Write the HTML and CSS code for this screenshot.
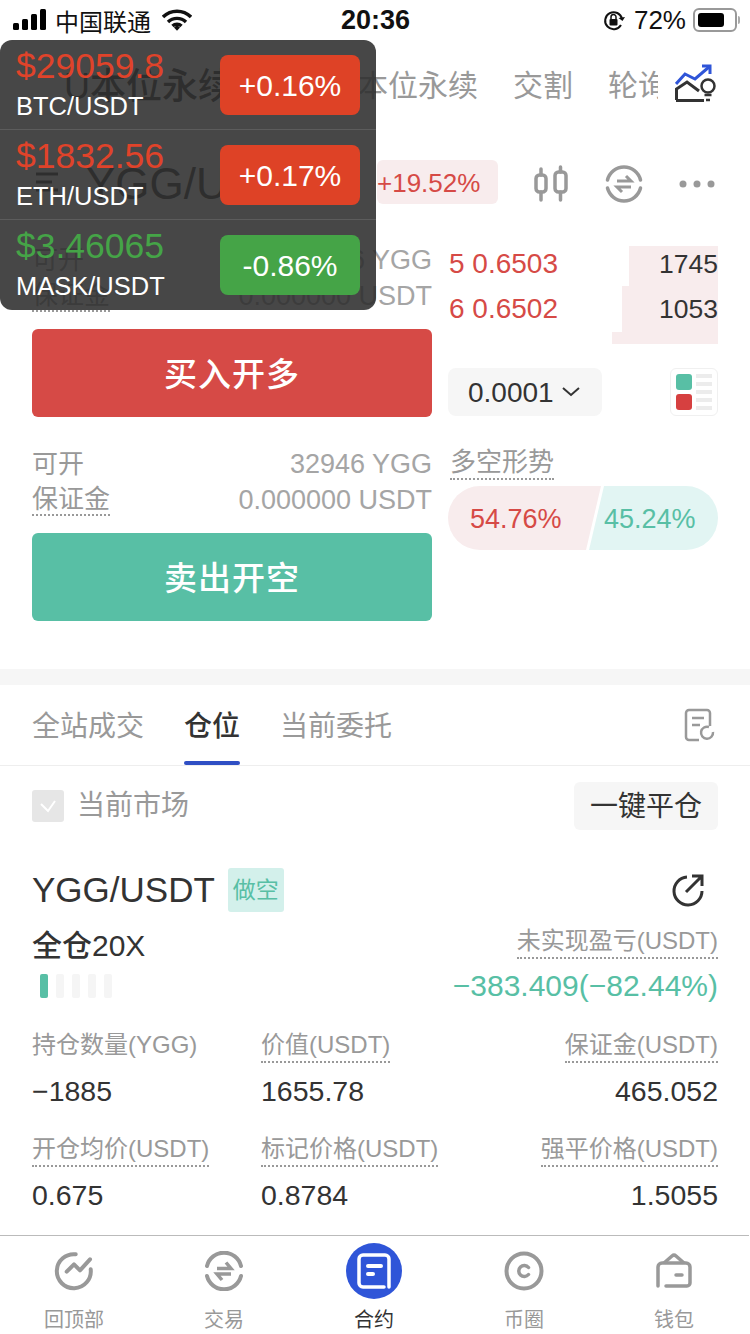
FILE: index.html
```html
<!DOCTYPE html>
<html lang="zh-CN">
<head>
<meta charset="utf-8">
<title>合约</title>
<link rel="stylesheet" href="styles.css">
</head>
<body>
<div id="page">
	<div class="status">
		<svg class="signal" width="36" height="22" viewBox="0 0 36 22"><rect x="0" y="14" width="6" height="7" rx="1.5"/><rect x="9" y="10" width="6" height="11" rx="1.5"/><rect x="18" y="5" width="6" height="16" rx="1.5"/><rect x="27" y="0" width="6" height="21" rx="1.5"/></svg>
		<span class="carrier">中国联通</span>
		<svg class="wifi" width="30" height="22" viewBox="0 0 30 22"><path d="M1 8a20 20 0 0 1 28 0M6 13a13 13 0 0 1 18 0M10.500 17a6.500 6.500 0 0 1 9 0" fill="none" stroke="#111" stroke-width="3.400"/><path d="M12 18.500l3-2.500 3 2.500-3 3.300z" fill="#111"/></svg>
		<span class="clock">20:36</span>
		<div class="status-right">
			<svg width="22" height="24" viewBox="0 0 22 24"><path d="M18 17a8.500 8.500 0 1 1 1-6" fill="none" stroke="#111" stroke-width="2"/><path d="M15.500 10l4 3 2.500-4" fill="#111"/><rect x="6.500" y="11" width="8" height="6.500" rx="1" fill="#111"/><path d="M8 11V9a2.500 2.500 0 0 1 5 0v2" fill="none" stroke="#111" stroke-width="1.500"/></svg>
			<span class="battery-num">72%</span>
			<div class="battery"><div class="battery-fill"></div></div>
			<div class="battery-nub"></div>
		</div>
	</div>

	<div class="nav">
		<span class="nav-item nav-on">U本位永续</span>
		<span class="nav-item">币本位永续</span>
		<span class="nav-item">交割</span>
		<span class="nav-item nav-cut">轮询</span>
		<svg class="nav-icon" width="42" height="40" viewBox="0 0 42 40"><path d="M1 20l9-10 10 5L34 3" fill="none" stroke="#2f55d8" stroke-width="3"/><path d="M27 2h8v8" fill="none" stroke="#2f55d8" stroke-width="3"/><path d="M1.500 36V25L12 18l12 9" fill="none" stroke="#333" stroke-width="3"/><path d="M1 36.500h28" stroke="#333" stroke-width="3"/><circle cx="33" cy="22" r="6.500" fill="none" stroke="#333" stroke-width="2.500"/><path d="M29.500 31h7M31 36h4" stroke="#333" stroke-width="2.500"/></svg>
	</div>

	<div class="pair">
		<svg class="pair-menu" width="24" height="22" viewBox="0 0 24 22"><path d="M0 3h22M0 11h16M0 19h22" stroke="#333" stroke-width="3"/></svg>
		<span class="pair-name">YGG/USDT</span>
		<span class="pair-rate">+19.52%</span>
		<div class="pair-tools">
			<svg width="34" height="38" viewBox="0 0 34 38"><g fill="none" stroke="#999" stroke-width="3.500" stroke-linecap="round"><rect x="2" y="10" width="10" height="17" rx="3.500"/><rect x="21" y="7" width="11" height="20" rx="3.500"/><path d="M7 4v6M7 27v8M26.500 2v5M26.500 27v8"/></g></svg>
			<svg class="swap" width="38" height="38" viewBox="0 0 38 38"><path d="M2.500 15a17 17 0 0 1 33 0M2.500 23a17 17 0 0 0 33 0" fill="none" stroke="#999" stroke-width="3.500" stroke-linecap="round"/><path d="M12 16h14l-5-5M26 22H12l5 5" fill="none" stroke="#999" stroke-width="3"/></svg>
			<svg width="36" height="10" viewBox="0 0 36 10"><circle cx="4" cy="5" r="3.500" fill="#999"/><circle cx="18" cy="5" r="3.500" fill="#999"/><circle cx="32" cy="5" r="3.500" fill="#999"/></svg>
		</div>
	</div>

	<div class="trade">
		<div class="trade-left">
			<div class="line"><span class="label">可开</span><span class="amount">32946 YGG</span></div>
			<div class="line"><span class="label dotted">保证金</span><span class="amount">0.000000 USDT</span></div>
			<div class="big-btn btn-red">买入开多</div>
			<div class="line line-second"><span class="label">可开</span><span class="amount">32946 YGG</span></div>
			<div class="line"><span class="label dotted">保证金</span><span class="amount">0.000000 USDT</span></div>
			<div class="big-btn btn-green">卖出开空</div>
		</div>
		<div class="trade-right">
			<div class="depth">
				<div class="depth-row">
					<div class="depth-fill" style="width:89px"></div>
					<span class="depth-price">5 0.6503</span><span class="depth-num">1745</span>
				</div>
				<div class="depth-row depth-row2">
					<div class="depth-fill" style="width:96px"></div>
					<span class="depth-price">6 0.6502</span><span class="depth-num">1053</span>
				</div>
				<div class="depth-row depth-row3">
					<div class="depth-fill" style="width:106px"></div>
				</div>
			</div>
			<div class="tools">
				<div class="select">0.0001<svg width="18" height="10" viewBox="0 0 18 10"><path d="M1 1l8 7 8-7" fill="none" stroke="#333" stroke-width="2"/></svg></div>
				<div class="layout-btn">
					<div class="layout-blocks"><i class="block-green"></i><i class="block-red"></i></div>
					<div class="layout-lines"><i></i><i></i><i></i><i></i><i></i></div>
				</div>
			</div>
			<div class="trend-title"><span class="dotted">多空形势</span></div>
			<div class="trend">
				<div class="trend-long">54.76%</div>
				<div class="trend-short">45.24%</div>
			</div>
		</div>
	</div>

	<div class="band"></div>

	<div class="tabs">
		<span class="tab">全站成交</span>
		<span class="tab tab-on">仓位</span>
		<span class="tab">当前委托</span>
		<svg class="tab-icon" width="32" height="34" viewBox="0 0 32 34"><path d="M15 32H5a3 3 0 0 1-3-3V5a3 3 0 0 1 3-3h18a3 3 0 0 1 3 3v13M8 10h12M8 17h8" fill="none" stroke="#999" stroke-width="2.500"/><path d="M29 24a6 6 0 1 1-4-5" fill="none" stroke="#999" stroke-width="2.500"/></svg>
	</div>

	<div class="filter">
		<div class="check"><svg width="18" height="14" viewBox="0 0 18 14"><path d="M2 5l7 7 7-10" fill="none" stroke="#fff" stroke-width="2"/></svg></div>
		<span class="filter-text">当前市场</span>
		<span class="close-all">一键平仓</span>
	</div>

	<div class="position">
		<div class="pos-head">
			<span class="pos-name">YGG/USDT</span>
			<span class="pos-tag">做空</span>
			<svg class="pos-share" width="34" height="34" viewBox="0 0 34 34"><path d="M16 4a14 14 0 1 0 15 14" fill="none" stroke="#333" stroke-width="3"/><path d="M15 19L31 3M21 3h10v10" fill="none" stroke="#333" stroke-width="3"/></svg>
		</div>
		<div class="pos-summary">
			<div>
				<div class="pos-mode">全仓20X</div>
				<div class="risk"><i class="risk-on"></i><i></i><i></i><i></i><i></i></div>
			</div>
			<div class="pos-profit">
				<span class="stat-label dotted">未实现盈亏(USDT)</span>
				<div class="profit-num">−383.409(−82.44%)</div>
			</div>
		</div>
		<div class="stats">
			<div class="stat"><span class="stat-label">持仓数量(YGG)</span><div class="stat-num">−1885</div></div>
			<div class="stat"><span class="stat-label dotted">价值(USDT)</span><div class="stat-num">1655.78</div></div>
			<div class="stat stat-end"><span class="stat-label dotted">保证金(USDT)</span><div class="stat-num">465.052</div></div>
			<div class="stat"><span class="stat-label dotted">开仓均价(USDT)</span><div class="stat-num">0.675</div></div>
			<div class="stat"><span class="stat-label dotted">标记价格(USDT)</span><div class="stat-num">0.8784</div></div>
			<div class="stat stat-end"><span class="stat-label dotted">强平价格(USDT)</span><div class="stat-num">1.5055</div></div>
		</div>
	</div>

	<div class="tabbar">
		<div class="bar-item">
			<div class="bar-icon"><svg width="40" height="40" viewBox="0 0 40 40"><path d="M21.700 3.300a17 17 0 1 0 15 15" fill="none" stroke="#999" stroke-width="4" stroke-linecap="round"/><path d="M12.700 20.700L20 13.300l6 6 10-11" fill="none" stroke="#999" stroke-width="4" stroke-linecap="round" stroke-linejoin="round"/></svg></div>
			<span>回顶部</span>
		</div>
		<div class="bar-item">
			<div class="bar-icon"><svg width="40" height="40" viewBox="0 0 40 40"><path d="M3 15a17.500 17.500 0 0 1 34 0M3 25a17.500 17.500 0 0 0 34 0" fill="none" stroke="#999" stroke-width="4" stroke-linecap="round"/><path d="M13 17.500h14l-5-6M27 23H13l5 6" fill="none" stroke="#999" stroke-width="3.500"/></svg></div>
			<span>交易</span>
		</div>
		<div class="bar-item bar-on">
			<div class="bar-icon bar-circle"><svg width="34" height="36" viewBox="0 0 34 36"><path d="M27 34H6a4 4 0 0 1-4-4V6a4 4 0 0 1 4-4h22a4 4 0 0 1 4 4v28" fill="none" stroke="#fff" stroke-width="3.500" stroke-linecap="round"/><path d="M11 13h13M11 21h5" stroke="#fff" stroke-width="4" stroke-linecap="round"/></svg></div>
			<span>合约</span>
		</div>
		<div class="bar-item">
			<div class="bar-icon"><svg width="40" height="40" viewBox="0 0 40 40"><circle cx="20" cy="20" r="17.500" fill="none" stroke="#999" stroke-width="4"/><path d="M24.500 16.500a5.500 5.500 0 1 0 0 7" fill="none" stroke="#999" stroke-width="3.500" stroke-linecap="round"/></svg></div>
			<span>币圈</span>
		</div>
		<div class="bar-item">
			<div class="bar-icon"><svg width="36" height="36" viewBox="0 0 36 36"><path d="M2 33V14a4 4 0 0 1 4-4h24a4 4 0 0 1 4 4v16a3 3 0 0 1-3 3H10" fill="none" stroke="#999" stroke-width="3.500" stroke-linecap="round"/><path d="M8 10l8-7a3 3 0 0 1 4 0l8 7" fill="none" stroke="#999" stroke-width="3.500"/><path d="M20 22h6" stroke="#999" stroke-width="3.500" stroke-linecap="round"/></svg></div>
			<span>钱包</span>
		</div>
	</div>

	<div class="ticker">
		<div class="ticker-row">
			<div class="ticker-info"><div class="ticker-price up">$29059.8</div><div class="ticker-name">BTC/USDT</div></div>
			<div class="ticker-rate rate-up">+0.16%</div>
		</div>
		<div class="ticker-row">
			<div class="ticker-info"><div class="ticker-price up">$1832.56</div><div class="ticker-name">ETH/USDT</div></div>
			<div class="ticker-rate rate-up">+0.17%</div>
		</div>
		<div class="ticker-row">
			<div class="ticker-info"><div class="ticker-price down">$3.46065</div><div class="ticker-name">MASK/USDT</div></div>
			<div class="ticker-rate rate-down">-0.86%</div>
		</div>
	</div>
</div>
</body>
</html>
```

FILE: styles.css
```css
*{ margin:0; padding:0; box-sizing:border-box; font-family:"Liberation Sans","Noto Sans CJK SC",sans-serif;}
body{ background:#fff;}
i{ display:block;}
svg{ display:block; flex:none;}
#page{ position:relative; width:750px; height:1334px; overflow:hidden; background:#fff; color:#333;}
.dotted{ border-bottom:2px dotted #999;}

.status{ position:relative; display:flex; align-items:center; height:40px; padding:0 0 0 13px; color:#111;}
.carrier{ font-size:24px; margin-left:6px;}
.wifi{ margin-left:11px;}
.clock{ position:absolute; left:341px; font-size:27px; font-weight:bold; line-height:40px;}
.status-right{ display:flex; align-items:center; margin-left:auto; padding-right:10px;}
.battery-num{ font-size:26px; margin-left:9px; margin-right:1px;}
.battery{ width:44px; height:24px; margin-left:6px; padding:3px; border:2px solid #999; border-radius:6px;}
.battery-fill{ width:26px; height:14px; background:#000; border-radius:3px;}
.battery-nub{ width:2px; height:8px; margin-left:1px; background:#aaa; border-radius:0 2px 2px 0;}

.nav{ display:flex; align-items:center; height:88px; padding:0 0 0 64px; white-space:nowrap;}
.nav-item{ font-size:30px; color:#999; margin-right:35px; margin-top:-3px;}
.nav-on{ font-size:36px; font-weight:500; color:#333; margin-right:24px; width:240px;}
.nav-cut{ width:50px; margin-right:0; overflow:hidden;}
.nav-icon{ margin-left:17px;}

.pair{ display:flex; align-items:center; height:44px; margin-top:32px; padding-left:36px;}
.pair-name{ font-size:44px; color:#333; margin:3px 0 0 26px; width:291px; white-space:nowrap; overflow:hidden;}
.pair-rate{ width:121px; height:44px; line-height:47px; text-align:left; font-size:26px; color:#d64a46; background:#f8eced; border-radius:6px;}
.pair-tools{ display:flex; align-items:center; margin:3px 0 0 36px; gap:36px;}
.pair-tools .swap{ margin-left:1px;}

.trade{ display:flex; margin-top:38px; padding-left:32px;}
.trade-left{ width:400px;}
.trade-right{ width:270px; margin-left:16px; padding-top:4px;}
.line{ display:flex; justify-content:space-between; align-items:center; height:36px; font-size:26px;}
.line-second{ margin-top:29px;}
.label{ color:#999; line-height:30px;}
.amount{ color:#a5a5a5; font-size:27px;}
.big-btn{ height:88px; line-height:92px; margin-top:15px; text-align:center; font-size:33px; font-weight:500; color:#fff; border-radius:6px; letter-spacing:1px;}
.btn-red{ background:#d64a46;}
.btn-green{ background:#58bfa5;}

.depth-row{ position:relative; display:flex; justify-content:space-between; align-items:center; height:40px; font-size:28px;}
.depth-row2{ height:46px;}
.depth-row3{ height:12px;}
.depth-fill{ position:absolute; right:0; top:0; bottom:0; background:#f8eced;}
.depth-price{ position:relative; color:#d64a46; margin-left:1px;}
.depth-num{ position:relative; color:#333; font-size:26.5px;}
.depth-row2 .depth-price,.depth-row2 .depth-num{ margin-top:0;}
.depth-row:first-child .depth-price,.depth-row:first-child .depth-num{ margin-top:-4px;}

.tools{ display:flex; justify-content:space-between; margin-top:24px;}
.select{ display:flex; align-items:center; gap:8px; width:154px; height:48px; padding:2px 0 0 20px; background:#f6f6f6; border-radius:8px; font-size:28px; color:#333;}
.select svg{ margin-top:-2px;}
.layout-btn{ display:flex; gap:4px; width:48px; height:48px; padding:5px; border:1px solid #f0f0f0; border-radius:6px;}
.layout-blocks{ display:flex; flex-direction:column; gap:4px;}
.block-green,.block-red{ width:16px; height:16px; border-radius:3px;}
.block-green{ background:#58bfa5;}
.block-red{ background:#d64040;}
.layout-lines{ display:flex; flex-direction:column; justify-content:space-between; flex:1;}
.layout-lines i{ height:4px; background:#ececec;}
.trend-title{ margin-top:28px; height:44px; padding-left:2px; font-size:26px; color:#999; line-height:36px;}
.trend-title span{ display:inline-block; height:36px;}
.trend{ display:flex; height:64px; margin-top:-2px; border-radius:32px; overflow:hidden; font-size:27px;}
.trend-long{ width:153px; line-height:66px; padding-left:22px; background:#f8eced; color:#d64a46; clip-path:polygon(0 0,100% 0,138px 100%,0 100%);}
.trend-short{ width:131px; margin-left:-14px; line-height:66px; padding-left:17px; background:#e2f5f3; color:#58bfa5; clip-path:polygon(17px 0,100% 0,100% 100%,2px 100%);}

.band{ height:16px; margin-top:48px; background:#f6f6f6;}

.tabs{ display:flex; align-items:center; height:81px; padding:0 32px; border-bottom:1px solid #eee;}
.tab{ position:relative; font-size:28px; color:#999; margin-right:40px; height:80px; line-height:84px;}
.tab-on{ color:#333; font-weight:500;}
.tab-on:after{ content:""; position:absolute; left:0; right:0; bottom:0; height:4px; background:#2f4fc4; border-radius:2px;}
.tab-icon{ margin-left:auto; margin-right:2px;}

.filter{ display:flex; align-items:center; height:48px; margin-top:16px; padding:0 32px;}
.check{ display:flex; align-items:center; justify-content:center; width:32px; height:32px; background:#e6e6e6; border-radius:3px;}
.filter-text{ font-size:28px; color:#999; margin-left:13px; line-height:46px;}
.close-all{ width:144px; height:48px; line-height:50px; margin-left:auto; text-align:center; font-size:28px; color:#333; background:#f6f6f6; border-radius:6px;}

.position{ padding:38px 32px 0;}
.pos-head{ display:flex; align-items:center; height:44px;}
.pos-name{ font-size:35px; color:#333; line-height:46px;}
.pos-tag{ width:56px; height:44px; line-height:44px; margin-left:13px; text-align:center; font-size:23px; color:#58bfa5; background:#d3f0eb; border-radius:3px;}
.pos-share{ margin-left:auto; margin-right:13px;}
.pos-summary{ display:flex; justify-content:space-between; margin-top:12px;}
.pos-mode{ font-size:30px; font-weight:500; color:#333; line-height:44px;}
.risk{ display:flex; gap:8px; margin:6px 0 0 8px;}
.risk i{ width:8px; height:24px; background:#f5f5f5; border-radius:2px;}
.risk .risk-on{ background:#58bfa5;}
.pos-profit{ text-align:right; padding-top:1px;}
.profit-num{ font-size:30px; color:#58bfa5; line-height:40px; margin-top:7px;}
.stat-label{ display:inline-block; font-size:24px; color:#999; line-height:32px; border-bottom-width:2px;}
.stats{ display:grid; grid-template-columns:229px 1fr 1fr; margin-top:23px;}
.stat{ height:104px;}
.stat .stat-label:not(.dotted){ border-bottom:2px solid transparent;}
.stat-num{ font-size:28.5px; color:#333; line-height:36px; margin-top:10px;}
.stat-end{ text-align:right;}

.tabbar{ position:absolute; left:-1px; right:1px; bottom:0; display:flex; height:99px; background:#fff; border-top:1px solid #bbb;}
.bar-item{ flex:1; text-align:center; font-size:20px; color:#999;}
.bar-item span{ display:block; line-height:28px; margin-top:7px;}
.bar-icon{ display:flex; align-items:center; justify-content:center; width:56px; height:56px; margin:7px auto 0;}
.bar-circle{ background:#2f55d8; border-radius:50%;}
.bar-on{ color:#333;}

.ticker{ position:absolute; left:0; top:40px; width:376px; height:270px; background:rgba(45,45,45,.88); border-radius:12px;}
.ticker-row{ display:flex; align-items:center; justify-content:space-between; height:90px; padding:0 16px 0 16px; border-bottom:1px solid #5c5c5c;}
.ticker-row:last-child{ border-bottom:0;}
.ticker-info{ padding-top:2px;}
.ticker-price{ font-size:35.5px; line-height:40px;}
.ticker-name{ font-size:25.5px; color:#fff; line-height:40px;}
.up{ color:#e0432a;}
.down{ color:#45a447;}
.ticker-rate{ width:140px; height:60px; line-height:62px; text-align:center; font-size:30px; color:#fff; border-radius:8px;}
.rate-up{ background:#de4226;}
.rate-down{ background:#45a447;}
```
